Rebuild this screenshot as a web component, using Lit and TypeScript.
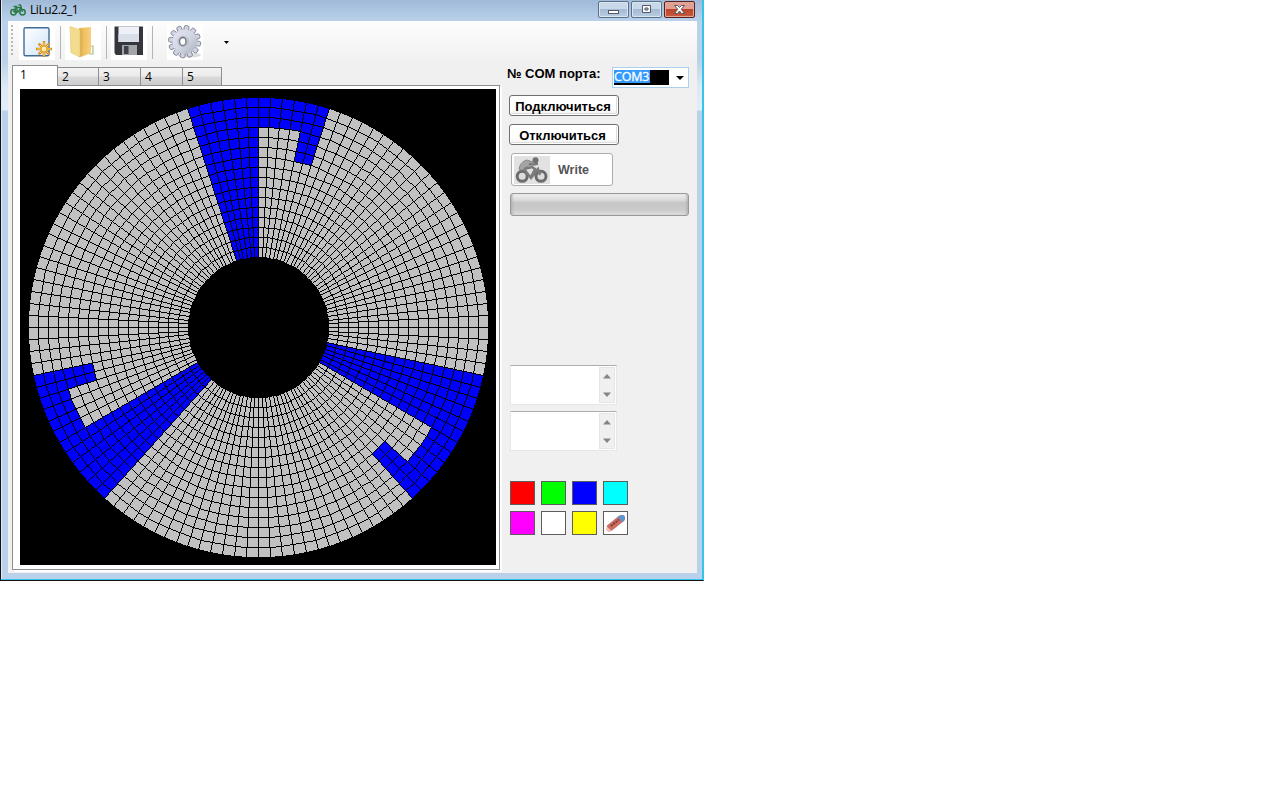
import { LitElement, html, svg, css } from "lit";
import { customElement, state } from "lit/decorators.js";

const SIZE = 476;
const CENTER = 238;
const INNER = 70;
const STEP = 10;
const RINGS = 16;
const SECTORS = 120;

// Whether a cell belongs to the figure that repeats every third of the wheel.
function isLit(sector: number, ring: number): boolean {
  const s = (sector + 6) % 40;
  const fromRim = RINGS - 1 - ring;
  if (s < 6) return true;
  if (s < 10) return fromRim < 3;
  if (s < 12) return fromRim < 6;
  return false;
}

@customElement("spoke-wheel")
export class SpokeWheel extends LitElement {
  static styles = css`
    :host { display: block; width: 476px; height: 476px; background: #000; }
    canvas { display: block; }
  `;

  firstUpdated() {
    const canvas = this.renderRoot.querySelector("canvas") as HTMLCanvasElement;
    const ctx = canvas.getContext("2d")!;
    const image = ctx.createImageData(SIZE, SIZE);
    const d = image.data;
    const put = (x: number, y: number, r: number, g: number, b: number) => {
      const i = (y * SIZE + x) * 4;
      d[i] = r; d[i + 1] = g; d[i + 2] = b; d[i + 3] = 255;
    };
    for (let y = 0; y < SIZE; y++) {
      for (let x = 0; x < SIZE; x++) {
        const dx = x - CENTER, dy = y - CENTER;
        const r = Math.hypot(dx, dy);
        const ring = Math.floor((r - INNER) / STEP);
        if (r < INNER || r > INNER + RINGS * STEP - 0.4) { put(x, y, 0, 0, 0); continue; }
        const turn = (Math.atan2(dx, -dy) / (2 * Math.PI) + 1) % 1;
        const sector = Math.floor(turn * SECTORS) % SECTORS;
        if (isLit(sector, Math.min(ring, RINGS - 1))) put(x, y, 0, 0, 254);
        else put(x, y, 193, 193, 193);
      }
    }
    // One pixel wide grid line.
    const line = (x0: number, y0: number, x1: number, y1: number) => {
      const n = Math.max(Math.abs(x1 - x0), Math.abs(y1 - y0)) || 1;
      for (let i = 0; i <= n; i++) {
        const x = Math.round(x0 + ((x1 - x0) * i) / n);
        const y = Math.round(y0 + ((y1 - y0) * i) / n);
        put(x, y, 0, 0, 0);
      }
    };
    const at = (r: number, s: number): [number, number] => {
      const a = (s * 2 * Math.PI) / SECTORS;
      return [Math.round(CENTER + r * Math.sin(a)), Math.round(CENTER - r * Math.cos(a))];
    };
    for (let s = 0; s < SECTORS; s++) {
      line(...at(INNER, s), ...at(INNER + RINGS * STEP, s));
      for (let k = 0; k < RINGS; k++) {
        const r = INNER + k * STEP;
        line(...at(r, s), ...at(r, s + 1));
      }
    }
    ctx.putImageData(image, 0, 0);
  }

  render() {
    return html`<canvas width=${SIZE} height=${SIZE}></canvas>`;
  }
}

@customElement("app-root")
export class AppRoot extends LitElement {
  @state() private tab = 1;

  static styles = css`
    :host { display: block; width: 1280px; height: 800px; background: #fff; overflow: hidden;
      font-family: "Liberation Sans", Arial, sans-serif; color: #000; }
    * { box-sizing: border-box; }
    svg { display: block; }
    .window { width: 704px; height: 581px; display: flex; flex-direction: column; padding: 0 5px 7px 7px;
      border-left: 1px solid #111; border-right: 1px solid #35c5e8; border-bottom: 1px solid #111;
      background: linear-gradient(#a0b9d7 0, #b9d1ea 21px, #b9d1ea 60px, #dbe8f5 85px, #e2eefa 110px, #b9d1ea 111px);
      box-shadow: inset 0 -1px #35c5e8, inset -1px 0 #35c5e8, inset 1px 0 #dce9f6; }
    .titlebar { height: 21px; display: flex; align-items: center; padding-left: 2px; margin-right: -4px; }
    .title { font: 12px "Open Sans", "Noto Sans", sans-serif; letter-spacing: -0.4px; margin-left: 4px; flex: 1; padding-bottom: 3px; }
    .titlebar > svg { margin-bottom: 2px; }
    .controls { display: flex; gap: 2px; align-self: flex-start; padding: 1px 7px 0 0; }
    .ctl { width: 31px; height: 17px; border: 1px solid #5b6f87; border-radius: 2px; display: grid; place-items: center;
      background: linear-gradient(#c9d8e9 45%, #a5bad3 50%, #b9cde3); box-shadow: inset 0 0 0 1px #dae6f2; }
    .close { background: linear-gradient(#e0a193 45%, #bd4329 50%, #c95c42); border-color: #5e1e1b; box-shadow: inset 0 0 0 1px #e0a79b; }
    .client { flex: 1; background: #f0f0f0; display: flex; flex-direction: column; min-height: 0; margin-right: 1px; }
    .toolbar { height: 41px; display: flex; align-items: flex-start; padding: 3px 0 0 3px; background: linear-gradient(#fdfdfd, #f1f1f1); }
    .grip { width: 2px; height: 31px; margin-top: 1px; background: repeating-linear-gradient(#b8b8b8 0 2px, transparent 2px 4px); }
    .tool { width: 36px; height: 36px; background: #fff; }
    .new { margin-left: 6px; }
    .open, .save { margin-left: 4px; }
    .gear { margin-left: 14px; }
    .more { margin: 17px 0 0 21px; }
    .sep { width: 1px; height: 33px; margin: 2px 0 0 5px; background: #b5b5b5; }
    .body { display: flex; flex: 1; min-height: 0; }
    .left { width: 492px; padding: 3px 0 3px 4px; display: flex; flex-direction: column; }
    .tabs { display: flex; align-items: flex-end; height: 21px; font: 12px "Open Sans", sans-serif; z-index: 1; }
    .tab { width: 42px; height: 19px; border: 1px solid #8c8e94; border-left-width: 0; padding: 0 0 0 4px; line-height: 17px;
      background: linear-gradient(#f3f3f3 0, #ebebeb 48%, #dadada 52%, #cecece); }
    .tab:nth-child(2) { width: 41px; }
    .tab:last-child { width: 39px; }
    .tab.sel { width: 46px; height: 21px; border-left-width: 1px; border-bottom: 0; background: #fff; padding: 0 0 0 7px; }
    .page { flex: 1; border: 1px solid #8c8e94; margin-top: -1px; background: #fff; padding: 3px 3px 4px 7px; box-shadow: 2px 2px #fdfdfd; }
    .side { flex: 1; display: flex; flex-direction: column; padding: 5px 8px 0 7px; }
    .port { display: flex; height: 21px; justify-content: space-between; font-weight: bold; font-size: 13px; line-height: 14px; }
    .combo { width: 77px; height: 21px; border: 1px solid #abd0ef; background: #fff; display: flex; padding: 2px 1px; }
    .field { width: 55px; height: 15px; background: #000; }
    .picked { display: block; width: 36px; height: 13px; background: #3399ff; color: #fff; font: 12.5px/14px "Open Sans", sans-serif; letter-spacing: -0.2px; -webkit-text-stroke: 0.3px #fff; }
    .arrow { width: 8px; height: 4px; margin: 6px 0 0 7px; }
    .btn { width: 110px; height: 21px; flex: none; border: 1px solid #707070; border-radius: 3px; background: linear-gradient(#fff 70%, #ededed);
      box-shadow: inset 0 0 0 1px #fff, inset -1px -1px 0 1px #ddd; font: bold 13px/21px "Liberation Sans", Arial, sans-serif; padding: 0 2px 0 0; color: #000;
      text-align: center; margin: 7px 0 0 2px; white-space: nowrap; }
    .btn + .btn { margin-top: 8px; padding-right: 3px; }
    .write { width: 102px; height: 33px; border: 1px solid #adadad; border-radius: 3px; background: #fff; margin: 8px 0 0 4px;
      display: flex; align-items: center; padding-left: 2px; font-weight: bold; font-size: 12.5px; color: #555; gap: 8px; }
    .progress { width: 179px; height: 23px; margin: 7px 0 149px 3px; border: 1px solid #989898; border-radius: 3px;
      background: linear-gradient(#f0f0f0 0, #d9d9d9 30%, #c6c6c6 42%, #cacaca 75%, #dedede); box-shadow: inset 3px 0 3px -2px #aaa, inset -3px 0 3px -2px #aaa; }
    .memo { width: 107px; height: 40px; margin: 0 0 6px 3px; background: #fff; border: 1px solid #e3e6ea; border-top-color: #abadb3;
      display: flex; justify-content: flex-end; padding: 1px; }
    .scroll { width: 16px; background: #f0f0f0; border: 1px solid #e5e5e5; display: flex; flex-direction: column; justify-content: space-between; align-items: center; padding: 6px 0 5px; }
    .swatches { display: grid; grid-template-columns: repeat(4, 25px); gap: 6px; margin: 24px 0 0 3px; }
    .swatch { width: 25px; height: 24px; border: 1px solid #5c5c5c; }
    .red { background: #f00; } .green { background: #0f0; } .blue { background: #00f; } .cyan { background: #0ff; }
    .magenta { background: #f0f; } .white { background: #fff; } .yellow { background: #ff0; }
  `;

  private memo() {
    return html`<div class="memo"><div class="scroll">
      <svg width="8" height="5"><path d="M4 0L8 4.5H0Z" fill="#858585" /></svg>
      <svg width="8" height="5"><path d="M0 .5H8L4 5Z" fill="#858585" /></svg>
    </div></div>`;
  }

  render() {
    const teeth = Array.from({ length: 12 }, (_, i) => i * 30 + 8);
    return html`
      <div class="window">
        <div class="titlebar">
          <svg width="16" height="14" viewBox="0 0 16 14" fill="none" stroke="#2c7a43">
            <circle cx="3.5" cy="9.2" r="2.7" stroke-width="1.5" /><circle cx="12.5" cy="9.2" r="2.7" stroke-width="1.5" />
            <path d="M3.5 9L6 4.5H11L8 9H3.5M6 4L8 9M12.5 9L10.5 2H8.5M3.5 3.5H7" stroke-width="1.3" />
          </svg>
          <div class="title">LiLu2.2_1</div>
          <div class="controls">
            <div class="ctl"><svg width="13" height="11"><rect x="1.5" y="6.5" width="10" height="3" fill="#fff" stroke="#535666" /></svg></div>
            <div class="ctl"><svg width="13" height="11"><path d="M2.5 1.5H10.5V8.5H2.5ZM5 4V6H8V4Z" fill="#fff" fill-rule="evenodd" stroke="#535666" /></svg></div>
            <div class="ctl close"><svg width="13" height="11"><path d="M1.5 1.5H4.5L6.5 3.5L8.5 1.5H11.5L8.3 5.2L11.5 9.5H8.5L6.5 7L4.5 9.5H1.5L4.7 5.2Z" fill="#fff" stroke="#535666" /></svg></div>
          </div>
        </div>
        <div class="client">
          <div class="toolbar">
            <div class="grip"></div>
            <svg class="tool new" viewBox="0 0 36 36">
              <defs><linearGradient id="pg" x2="1" y2="1"><stop stop-color="#fff" /><stop offset="1" stop-color="#cfe5fa" /></linearGradient></defs>
              <rect x="5" y="3.7" width="25" height="28" rx="1.5" fill="url(#pg)" stroke="#406b99" stroke-width="1.4" />
              <g stroke="#d98513" stroke-width="2.5"><path d="M25 17V33M17 25H33M19.7 19.7L30.3 30.3M30.3 19.7L19.7 30.3" /></g>
              <g stroke="#ffe278" stroke-width="1"><path d="M25 18V32M18 25H32M20.5 20.5L29.5 29.5M29.5 20.5L20.5 29.5" /></g>
              <circle cx="25" cy="25" r="3" fill="#fff0a0" stroke="#e39622" />
            </svg>
            <div class="sep"></div>
            <svg class="tool open" viewBox="0 0 36 36">
              <defs><linearGradient id="fb" x2="1"><stop stop-color="#eab54c" /><stop offset="1" stop-color="#f7cf7e" /></linearGradient></defs>
              <path d="M14 4L26 3V29L16 33H13Z" fill="url(#fb)" /><path d="M24 30H28V22H26" fill="none" stroke="#a9bb8e" stroke-width="1.2" />
              <path d="M5 2.5L15 6V33L6 28.5Z" fill="#f3dc8e" stroke="#e6c974" stroke-width=".7" />
              <path d="M15 6L17.5 4.5V31L15 33Z" fill="#dfb457" />
            </svg>
            <div class="sep"></div>
            <svg class="tool save" viewBox="0 0 36 36">
              <path d="M3.5 2.5H32V31H5L3.5 29Z" fill="#34363c" /><rect x="7.5" y="2.5" width="20.5" height="15.5" fill="#edf1f7" />
              <path d="M7.5 10H28V18H7.5Z" fill="#d8dfe9" /><rect x="11" y="21" width="15" height="10" fill="#a2a5aa" /><rect x="13" y="22" width="4.5" height="8" fill="#3d4046" />
            </svg>
            <div class="sep"></div>
            <svg class="tool gear" viewBox="0 0 36 36">
              <defs><linearGradient id="gr" x2="1" y2="1"><stop stop-color="#e6e2f6" /><stop offset=".5" stop-color="#d3d8e4" /><stop offset="1" stop-color="#a9b2bd" /></linearGradient></defs>
              <ellipse cx="22" cy="31" rx="12" ry="2.5" fill="#ddd" />
              ${teeth.map((a) => svg`<rect x="15.2" y="1.5" width="4.8" height="7" rx="1.6" fill="#d0d2e0" stroke="#747b8c" stroke-width=".8" transform="rotate(${a} 17.6 17.7)" />`)}
              <circle cx="17.6" cy="17.7" r="12.2" fill="url(#gr)" />
              <circle cx="16.2" cy="17.5" r="5.8" fill="#b9c0ca" /><ellipse cx="15.8" cy="17.5" rx="3.2" ry="4" fill="#fff" stroke="#6f7883" stroke-width="1.3" />
            </svg>
            <svg class="more" width="5" height="3" viewBox="0 0 5 3"><path d="M0 0H5L2.5 3Z" /></svg>
          </div>
          <div class="body">
            <div class="left">
              <div class="tabs">
                ${[1, 2, 3, 4, 5].map((n) => html`<div class="tab ${n === this.tab ? "sel" : ""}" @click=${() => (this.tab = n)}>${n}</div>`)}
              </div>
              <div class="page"><spoke-wheel></spoke-wheel></div>
            </div>
            <div class="side">
              <div class="port"><span>№ COM порта:</span><div class="combo"><div class="field"><span class="picked">COM3</span></div><svg class="arrow" viewBox="0 0 8 4"><path d="M0 0H8L4 4Z" /></svg></div></div>
              <button class="btn">Подключиться</button>
              <button class="btn">Отключиться</button>
              <div class="write">
                <svg width="36" height="28" viewBox="0 0 36 28"><rect width="36" height="28" fill="#e2e2e2" />
                  <g fill="#ddd" stroke="#6c6c6c" stroke-width="3"><circle cx="8.2" cy="20.3" r="5" /><circle cx="27" cy="20.3" r="5" /></g>
                  <path d="M5 13.5Q6 5.5 13 4L19 6L17 9L12 11L9 14Z" fill="#a5a5a5" stroke="#8a8a8a" />
                  <path d="M10 13L18 11L21 13L17 21M15 8L20 8.5L24 7.5M10 13L17 22L24 13L26 19" fill="none" stroke="#7a7a7a" stroke-width="2.4" />
                  <circle cx="21.5" cy="4.2" r="3" fill="#6f6f6f" />
                </svg>Write
              </div>
              <div class="progress"></div>
              ${this.memo()}${this.memo()}
              <div class="swatches">
                ${["red", "green", "blue", "cyan", "magenta", "white", "yellow"].map((c) => html`<div class="swatch ${c}"></div>`)}
                <div class="swatch white"><svg width="23" height="22" viewBox="0 0 23 22">
                  <path d="M3 13.5L14 4.5Q18 2 20.5 4Q22 7 20 9L8 18.5Q4 21 2.5 18Z" fill="#cb6e61" />
                  <path d="M13.5 5Q18 1.5 20.5 4Q22 7 18.5 10.2Z" fill="#5e94cd" /><path d="M2.8 14.5L7.5 19Q4 21 2.5 18Z" fill="#f0c4bd" />
                  <path d="M7 14L15 7.5" stroke="#7d3a3a" stroke-width="2" stroke-dasharray="2 1" />
                </svg></div>
              </div>
            </div>
          </div>
        </div>
      </div>`;
  }
}
